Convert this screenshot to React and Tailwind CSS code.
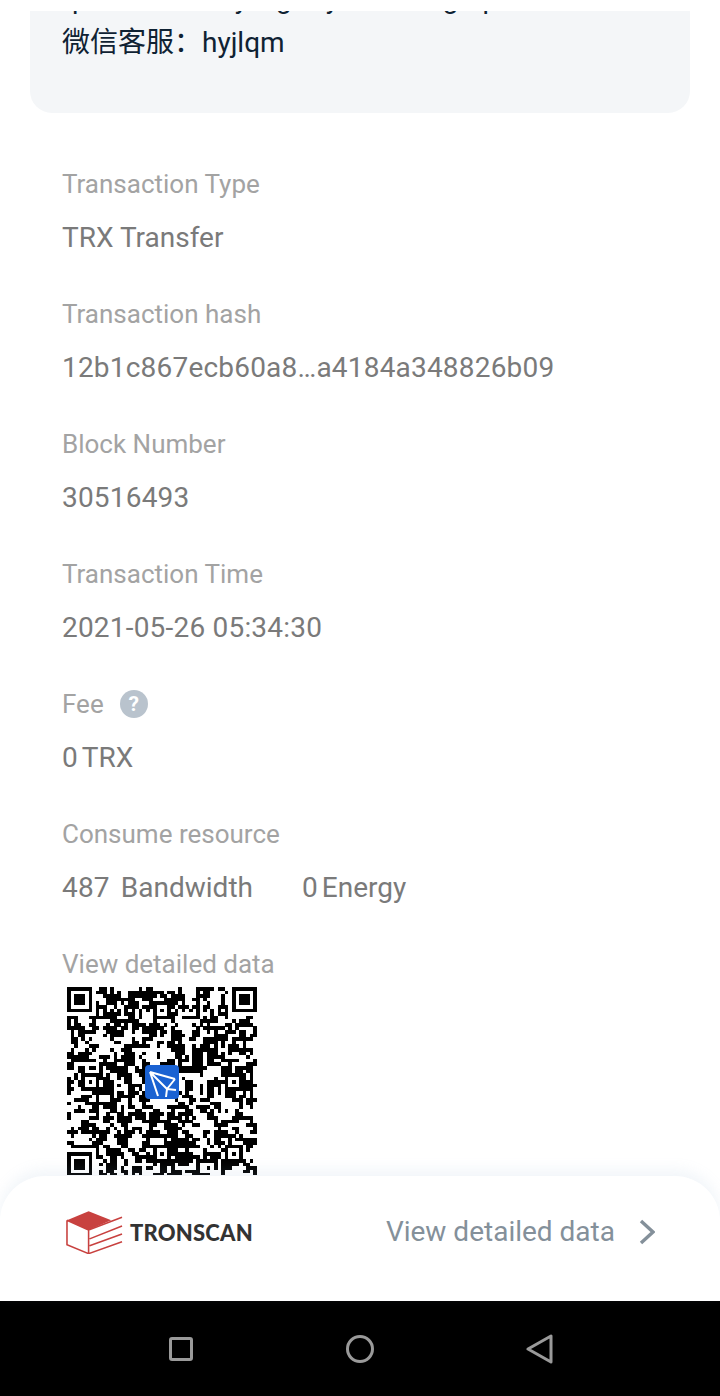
import React from "react";

function qrCells() {
  const n = 53;
  let s = 20210526;
  const rnd = () => {
    s = (s * 1664525 + 1013904223) >>> 0;
    return (s >>> 16) / 65536;
  };
  const cells = [];
  const grid = {};
  const inFinder = (x, y) =>
    (x < 8 && y < 8) || (x > n - 9 && y < 8) || (x < 8 && y > n - 9);
  const finder = (ox, oy, x, y) => {
    const a = x - ox;
    const b = y - oy;
    if (a < 0 || b < 0 || a > 6 || b > 6) return false;
    return a === 0 || b === 0 || a === 6 || b === 6 || (a >= 2 && a <= 4 && b >= 2 && b <= 4);
  };
  const aligns = [6, 26, 46];
  const alignAt = (x, y) => {
    for (const ax of aligns) {
      for (const ay of aligns) {
        if ((ax === 6 && ay === 6) || (ax === 6 && ay === 46) || (ax === 46 && ay === 6)) continue;
        const d = Math.max(Math.abs(x - ax), Math.abs(y - ay));
        if (d <= 2) return d === 2 || d === 0 ? 1 : 0;
      }
    }
    return -1;
  };
  for (let y = 0; y < n; y++) {
    for (let x = 0; x < n; x++) {
      let on;
      if (inFinder(x, y)) {
        on = finder(0, 0, x, y) || finder(n - 7, 0, x, y) || finder(0, n - 7, x, y);
      } else if (alignAt(x, y) >= 0) {
        on = alignAt(x, y) === 1;
      } else if (y === 6) {
        on = x % 2 === 0;
      } else if (x === 6) {
        on = y % 2 === 0;
      } else {
        const left = grid[x - 1 + "," + y] ? 1 : 0;
        const up = grid[x + "," + (y - 1)] ? 1 : 0;
        on = rnd() < 0.3 + 0.22 * (left + up);
      }
      grid[x + "," + y] = on;
      if (on) cells.push([x, y]);
    }
  }
  return cells;
}

function QrCode() {
  const cells = qrCells();
  return (
    <div className="relative mt-[5px] ml-[5px] h-[188px] w-[190px] overflow-hidden">
      <svg width="190" height="190" viewBox="0 0 53 53" shapeRendering="crispEdges" className="block">
        {cells.map(([x, y]) => (
          <rect key={x + "-" + y} x={x} y={y} width="1.02" height="1.02" fill="#000" />
        ))}
      </svg>
      <div className="absolute left-[78px] top-[78px] h-[34px] w-[34px] rounded-[4px] bg-[#1a62d2]">
        <svg width="34" height="34" viewBox="0 0 34 34" fill="none" stroke="#fff" strokeWidth="2">
          <path d="M5 7 L30 14 M5 7 L13 31 M5 7 L22 24 M22 24 L30 14 M22 24 L21 32 M22 24 L31 25" />
        </svg>
      </div>
    </div>
  );
}

function Label({ children }) {
  return <div className="h-[36px] text-[26px] leading-[36px] text-[#a3a3a3]">{children}</div>;
}

function Value({ children, numeric }) {
  return (
    <div
      className={
        numeric
          ? "mt-[18px] h-[36px] text-[28px] leading-[36px] tracking-[0.2px] text-[#7a7a7a]"
          : "mt-[18px] h-[36px] text-[28px] leading-[36px] text-[#7a7a7a]"
      }
    >
      {children}
    </div>
  );
}

function Row({ label, value, numeric }) {
  return (
    <div className="mb-[40px]">
      <Label>{label}</Label>
      <Value numeric={numeric}>{value}</Value>
    </div>
  );
}

function App() {
  return (
    <div
      className="flex h-[1396px] w-[720px] flex-col overflow-hidden bg-white"
      style={{ fontFamily: "Roboto, 'Noto Sans CJK SC', sans-serif" }}
    >
      <div className="relative h-[1176px] overflow-hidden pt-[11px]">
        <div className="mx-[30px] h-[102px] overflow-hidden rounded-b-[22px] bg-[#f4f6f8] px-[32px] text-[28px] text-[#0f2233]">
          <div className="-mt-[30px] flex h-[36px] leading-[36px]">
            <span className="ml-[10px]">p</span>
            <span className="ml-[77px]">ooo</span>
            <span className="ml-[22px]">y</span>
            <span className="ml-[28px]">g</span>
            <span className="ml-[34px]">y</span>
            <span className="ml-[8px]">o</span>
            <span className="ml-[80px]">g</span>
            <span className="ml-[24px]">p</span>
            <span className="ml-[34px]">o</span>
            <span className="ml-[96px]">o</span>
          </div>
          <div className="mt-[8px] h-[36px] leading-[36px]">微信客服：hyjlqm</div>
        </div>

        <div className="px-[62px] pt-[53px]">
          <Row label="Transaction Type" value="TRX Transfer" />
          <Row label="Transaction hash" value="12b1c867ecb60a8…a4184a348826b09" numeric />
          <Row label="Block Number" value="30516493" numeric />
          <Row label="Transaction Time" value="2021-05-26 05:34:30" numeric />
          <Row
            label={
              <span className="flex items-center">
                Fee
                <span className="ml-[16px] flex h-[28px] w-[28px] items-center justify-center rounded-full bg-[#b9c3cd] text-[21px] font-bold leading-none text-white">
                  ?
                </span>
              </span>
            }
            value={
              <span className="flex">
                <span>0</span>
                <span className="ml-[4px]">TRX</span>
              </span>
            }
          />
          <Row
            label="Consume resource"
            value={
              <span className="flex">
                <span className="flex w-[240px]">
                  <span className="tracking-[0.2px]">487</span>
                  <span className="ml-[11px]">Bandwidth</span>
                </span>
                <span>0</span>
                <span className="ml-[4px]">Energy</span>
              </span>
            }
          />
          <Label>View detailed data</Label>
          <QrCode />
        </div>
      </div>

      <div className="relative z-10 flex h-[125px] items-center justify-between rounded-t-[45px] bg-white pb-[13px] pl-[66px] pr-[65px] shadow-[0_-6px_14px_rgba(150,175,210,0.13)]">
        <div className="flex items-center">
          <svg width="57" height="44" viewBox="0 0 58 44" fill="none" className="block">
            <path d="M1 10 L23 1 L46 10 L23 20 Z" fill="#c8413f" />
            <path
              d="M1 10 V35 L23 44 V20 L1 10 M23 20 L57 7 M24 29 L57 16 M24 36 L57 24 M23 44 L57 32"
              stroke="#c8413f"
              strokeWidth="1.6"
            />
          </svg>
          <span
            className="ml-[7px] text-[22px] font-black tracking-[0.2px] text-[#333333]"
            style={{ fontFamily: "Lato, sans-serif" }}
          >
            TRONSCAN
          </span>
        </div>
        <div className="flex items-center">
          <span className="text-[28px] text-[#84909a]">View detailed data</span>
          <svg width="16" height="26" viewBox="0 0 16 26" fill="none" className="ml-[24px] block">
            <path d="M2 2 L14 13 L2 24" stroke="#84909a" strokeWidth="3.4" />
          </svg>
        </div>
      </div>

      <div className="flex h-[95px] items-center bg-black">
        <div className="ml-[169px] h-[24px] w-[24px] rounded-[3px] border-[3px] border-[#9a9a9a]" />
        <div className="ml-[153px] h-[28px] w-[28px] rounded-full border-[3px] border-[#9a9a9a]" />
        <svg width="28" height="30" viewBox="0 0 28 30" fill="none" className="ml-[152px] block">
          <path d="M2 15 L25 2 V28 Z" stroke="#9a9a9a" strokeWidth="3" strokeLinejoin="round" />
        </svg>
      </div>
    </div>
  );
}

export default App;
